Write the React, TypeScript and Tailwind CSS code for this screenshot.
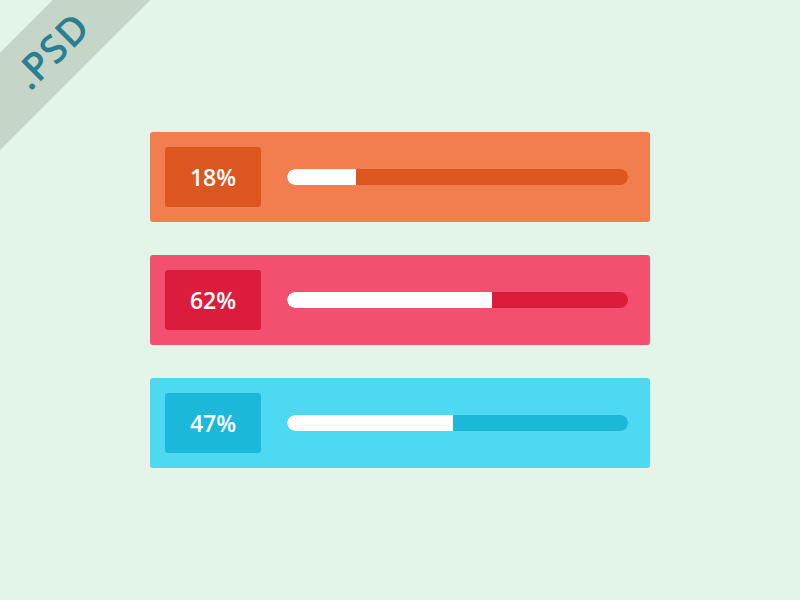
import React from 'react';

type Meter = {
  value: number;
  fill: number; // white track length in px
  card: string;
  badge: string;
  track: string;
};

const meters: Meter[] = [
  { value: 18, fill: 69, card: 'bg-[#f27e50]', badge: 'bg-[#dc561f]', track: 'bg-[#dc561f]' },
  { value: 62, fill: 205, card: 'bg-[#f2506e]', badge: 'bg-[#db1c3c]', track: 'bg-[#db1c3c]' },
  { value: 47, fill: 166, card: 'bg-[#4dd9f2]', badge: 'bg-[#1cb8da]', track: 'bg-[#1cb8da]' },
];

// Progress card: percent badge on the left, pill bar on the right
function MeterCard({ m }: { m: Meter }) {
  return (
    <div className={`flex h-[90px] w-[500px] items-center rounded-[3px] pl-[15px] ${m.card}`}>
      <div
        className={`flex h-[60px] w-[96px] items-center justify-center rounded-[3px] text-[23px] font-semibold text-white ${m.badge}`}
      >
        {m.value}%
      </div>
      <div className={`ml-[26px] h-4 w-[341px] overflow-hidden rounded-full ${m.track}`}>
        <div className="h-full rounded-l-full bg-white" style={{ width: m.fill }} />
      </div>
    </div>
  );
}

export default function App() {
  return (
    <div
      className="relative h-[600px] w-[800px] overflow-hidden bg-[#e3f4e8]"
      style={{ fontFamily: '"Open Sans", "Liberation Sans", sans-serif' }}
    >
      {/* corner ribbon */}
      <div className="absolute left-[-99px] top-[16px] flex h-[69px] w-[300px] -rotate-45 items-center justify-center bg-[#c5d5c8]">
        <span className="text-[39px] font-semibold tracking-wide text-[#2a8090]">.PSD</span>
      </div>

      <div className="flex flex-col gap-[33px] pl-[150px] pt-[132px]">
        {meters.map((m) => (
          <MeterCard key={m.value} m={m} />
        ))}
      </div>
    </div>
  );
}
